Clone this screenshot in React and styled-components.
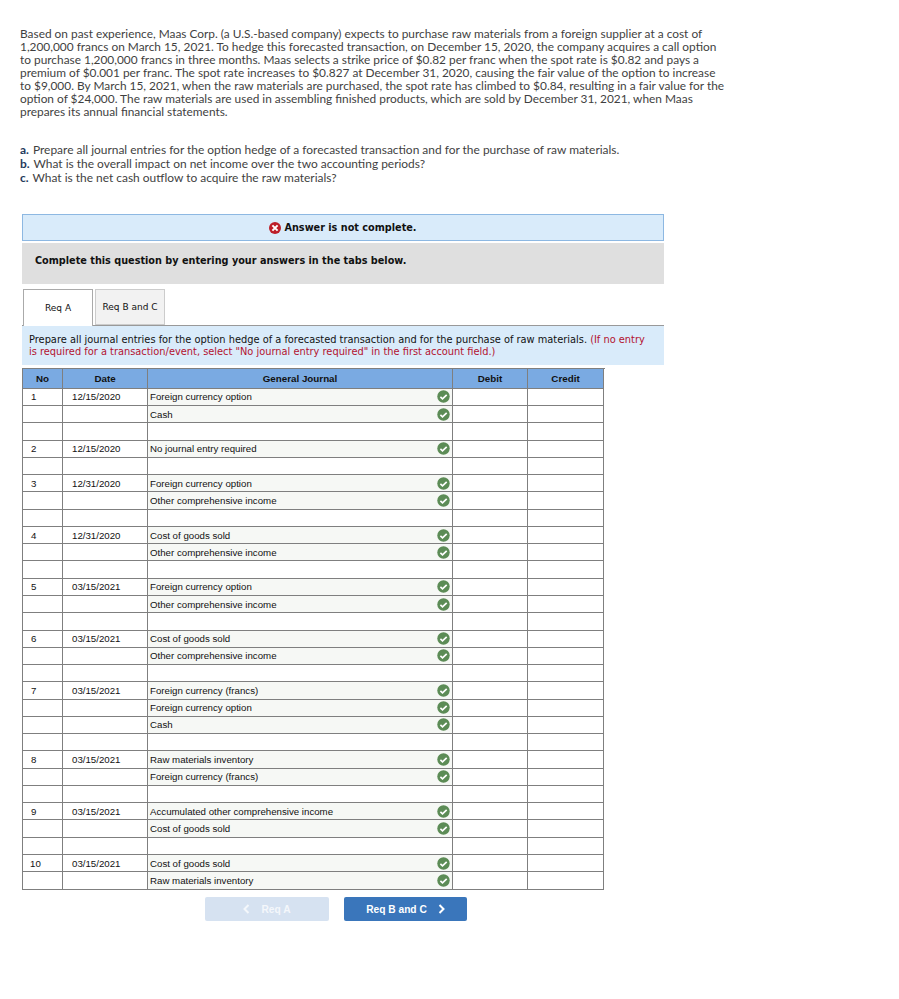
import React from "react";
import styled, { createGlobalStyle } from "styled-components";

const Global = createGlobalStyle`
  body { margin: 0; background: #fff; font-family: "Liberation Sans", Arial, sans-serif; }
`;

const lines = [
  "Based on past experience, Maas Corp. (a U.S.-based company) expects to purchase raw materials from a foreign supplier at a cost of",
  "1,200,000 francs on March 15, 2021. To hedge this forecasted transaction, on December 15, 2020, the company acquires a call option",
  "to purchase 1,200,000 francs in three months. Maas selects a strike price of $0.82 per franc when the spot rate is $0.82 and pays a",
  "premium of $0.001 per franc. The spot rate increases to $0.827 at December 31, 2020, causing the fair value of the option to increase",
  "to $9,000. By March 15, 2021, when the raw materials are purchased, the spot rate has climbed to $0.84, resulting in a fair value for the",
  "option of $24,000. The raw materials are used in assembling finished products, which are sold by December 31, 2021, when Maas",
  "prepares its annual financial statements.",
];

const parts = [
  ["a.", "Prepare all journal entries for the option hedge of a forecasted transaction and for the purchase of raw materials."],
  ["b.", "What is the overall impact on net income over the two accounting periods?"],
  ["c.", "What is the net cash outflow to acquire the raw materials?"],
];

const entries = [
  { no: 1, date: "12/15/2020", accounts: ["Foreign currency option", "Cash"], blanks: 1 },
  { no: 2, date: "12/15/2020", accounts: ["No journal entry required"], blanks: 1 },
  { no: 3, date: "12/31/2020", accounts: ["Foreign currency option", "Other comprehensive income"], blanks: 1 },
  { no: 4, date: "12/31/2020", accounts: ["Cost of goods sold", "Other comprehensive income"], blanks: 1 },
  { no: 5, date: "03/15/2021", accounts: ["Foreign currency option", "Other comprehensive income"], blanks: 1 },
  { no: 6, date: "03/15/2021", accounts: ["Cost of goods sold", "Other comprehensive income"], blanks: 1 },
  { no: 7, date: "03/15/2021", accounts: ["Foreign currency (francs)", "Foreign currency option", "Cash"], blanks: 1 },
  { no: 8, date: "03/15/2021", accounts: ["Raw materials inventory", "Foreign currency (francs)"], blanks: 1 },
  { no: 9, date: "03/15/2021", accounts: ["Accumulated other comprehensive income", "Cost of goods sold"], blanks: 1 },
  { no: 10, date: "03/15/2021", accounts: ["Cost of goods sold", "Raw materials inventory"], blanks: 0 },
];

const Page = styled.div`
  padding: 27px 0 78px 20px;
  width: 879px;
  box-sizing: border-box;
`;

const Problem = styled.div`
  font-family: "Lato", sans-serif;
  font-size: 11.88px;
  line-height: 13px;
  color: #3f3f3f;
  white-space: nowrap;
  div { height: 13px; }
`;

const Parts = styled.div`
  margin-top: 25px;
  font-family: "Lato", sans-serif;
  font-size: 11.95px;
  line-height: 14px;
  color: #3f3f3f;
  b { color: #1f3a5c; margin-right: 1px; }
`;

const Panel = styled.div`
  margin: 29px 0 0 2px;
  width: 642px;
`;

const Alert = styled.div`
  box-sizing: border-box;
  height: 27px;
  background: #d9ebfa;
  border: 1px solid #8db8e2;
  display: flex;
  align-items: center;
  justify-content: center;
  gap: 3px;
  font-family: "DejaVu Sans", Verdana, sans-serif;
  font-size: 9.7px;
  font-weight: 700;
  color: #111;
`;

const Notice = styled.div`
  box-sizing: border-box;
  height: 41px;
  margin-top: 2px;
  padding: 11px 13px;
  background: #dfdfdf;
  font-family: "DejaVu Sans", Verdana, sans-serif;
  font-size: 9.7px;
  line-height: 13px;
  font-weight: 700;
  color: #111;
`;

const Tabs = styled.div`
  display: flex;
  gap: 2px;
  margin-top: 5px;
  padding-left: 1px;
  height: 37px;
  box-sizing: border-box;
  border-bottom: 1px solid #999;
`;

const Tab = styled.div`
  box-sizing: border-box;
  width: 70px;
  height: ${(p) => (p.$active ? "37px" : "36px")};
  display: flex;
  align-items: center;
  justify-content: center;
  padding-bottom: ${(p) => (p.$active ? "1px" : "0")};
  border: 1px solid ${(p) => (p.$active ? "#aaa" : "#ccc")};
  border-bottom: ${(p) => (p.$active ? "none" : "1px solid #ccc")};
  background: ${(p) => (p.$active ? "#fff" : "#f2f2f2")};
  font-family: "DejaVu Sans", Verdana, sans-serif;
  font-size: 9px;
  color: #111;
`;

const Instruction = styled.div`
  box-sizing: border-box;
  height: 39px;
  padding: 8px 7px;
  background: #d9ebfa;
  font-family: "DejaVu Sans", Verdana, sans-serif;
  font-size: 9.83px;
  line-height: 12px;
  color: #111;
  white-space: nowrap;
  span { color: #b3122e; }
`;

const Journal = styled.div`
  margin: 3px 0 0 2px;
  width: 582px;
  border-left: 1px solid #7f7f7f;
  border-top: 1px solid #7f7f7f;
`;

const Row = styled.div`
  display: grid;
  grid-template-columns: 40px 85px 305px 75px 76px;
  height: ${(p) => (p.$head ? "19.8px" : "17.27px")};
  box-sizing: border-box;
`;

const Cell = styled.div`
  box-sizing: border-box;
  border-right: 1px solid #7f7f7f;
  border-bottom: 1px solid #7f7f7f;
  display: flex;
  align-items: center;
  min-width: 0;
  font-family: "Liberation Sans", Arial, sans-serif;
  font-size: 9.7px;
  color: #111;
`;

const HeadCell = styled(Cell)`
  justify-content: center;
  background: #7aaae2;
  font-weight: 700;
  font-size: 9.8px;
`;

const NoCell = styled(Cell)`
  padding-left: ${(p) => (p.$wide ? "7px" : "8px")};
`;

const DateCell = styled(Cell)`
  padding-left: 9px;
`;

const AccountCell = styled(Cell)`
  justify-content: space-between;
  padding: 0 2px;
  background: ${(p) => (p.$filled ? "#f6f8f5" : "#fff")};
`;

const Nav = styled.div`
  display: flex;
  gap: 15px;
  margin: 7.4px 0 0 185px;
`;

const NavButton = styled.div`
  box-sizing: border-box;
  height: 24px;
  padding-top: 1px;
  width: ${(p) => (p.$off ? "124px" : "123px")};
  display: flex;
  align-items: center;
  justify-content: center;
  gap: 11px;
  border-radius: 2px;
  background: ${(p) => (p.$off ? "#d6e2f1" : "#3a76bb")};
  color: ${(p) => (p.$off ? "#f4f7fb" : "#fff")};
  font-family: "Liberation Sans", Arial, sans-serif;
  font-size: 10.2px;
  font-weight: 700;
`;

const Check = () => (
  <svg width="13" height="13" viewBox="0 0 13 13">
    <circle cx="6.5" cy="6.5" r="6.2" fill="#5c8c56" />
    <path d="M3.4 6.9 L5.5 8.8 L9.7 4.8" fill="none" stroke="#fff" strokeWidth="1.7" />
  </svg>
);

const ErrorIcon = () => (
  <svg width="12" height="12" viewBox="0 0 12 12">
    <circle cx="6" cy="6" r="6" fill="#bd1e28" />
    <path d="M3.4 3.4 L8.6 8.6 M8.6 3.4 L3.4 8.6" stroke="#fff" strokeWidth="2" />
  </svg>
);

const Chevron = ({ left }) => (
  <svg width="7" height="10" viewBox="0 0 7 10">
    <path d={left ? "M5.5 1 L1.5 5 L5.5 9" : "M1.5 1 L5.5 5 L1.5 9"} fill="none" stroke="currentColor" strokeWidth="2" />
  </svg>
);

const BodyRow = ({ no, date, account }) => (
  <Row>
    <NoCell $wide={no === 10}>{no}</NoCell>
    <DateCell>{date}</DateCell>
    <AccountCell $filled={!!account}>
      {account}
      {account && <Check />}
    </AccountCell>
    <Cell />
    <Cell />
  </Row>
);

export default function App() {
  return (
    <Page>
      <Global />
      <Problem>
        {lines.map((l) => (
          <div key={l}>{l}</div>
        ))}
      </Problem>
      <Parts>
        {parts.map(([k, t]) => (
          <div key={k}>
            <b>{k}</b> {t}
          </div>
        ))}
      </Parts>
      <Panel>
        <Alert>
          <ErrorIcon />
          Answer is not complete.
        </Alert>
        <Notice>Complete this question by entering your answers in the tabs below.</Notice>
        <Tabs>
          <Tab $active>Req A</Tab>
          <Tab>Req B and C</Tab>
        </Tabs>
        <Instruction>
          Prepare all journal entries for the option hedge of a forecasted transaction and for the purchase of raw materials.{" "}
          <span>
            (If no entry
            <br />
            is required for a transaction/event, select "No journal entry required" in the first account field.)
          </span>
        </Instruction>
      </Panel>
      <Journal>
        <Row $head>
          <HeadCell>No</HeadCell>
          <HeadCell>Date</HeadCell>
          <HeadCell>General Journal</HeadCell>
          <HeadCell>Debit</HeadCell>
          <HeadCell>Credit</HeadCell>
        </Row>
        {entries.map((e) => (
          <React.Fragment key={e.no}>
            {e.accounts.map((a, i) => (
              <BodyRow key={a} no={i === 0 ? e.no : ""} date={i === 0 ? e.date : ""} account={a} />
            ))}
            {Array.from({ length: e.blanks }).map((_, i) => (
              <BodyRow key={i} />
            ))}
          </React.Fragment>
        ))}
      </Journal>
      <Nav>
        <NavButton $off>
          <Chevron left />
          Req A
        </NavButton>
        <NavButton>
          Req B and C
          <Chevron />
        </NavButton>
      </Nav>
    </Page>
  );
}
